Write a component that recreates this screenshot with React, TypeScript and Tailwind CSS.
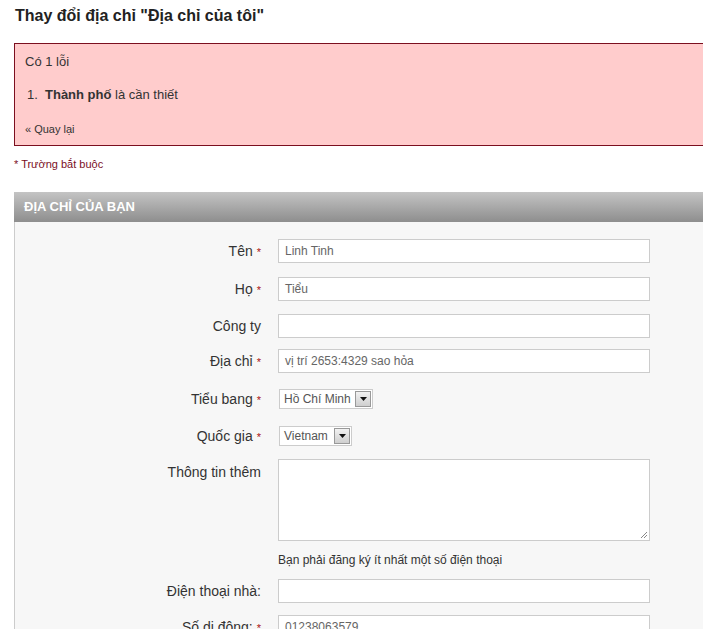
import React from "react";

const font = { fontFamily: '"Liberation Sans", Arial, sans-serif' };

function Req() {
  return <span className="ml-[4px] text-[11px] text-[#a11]">*</span>;
}

function Row(props: { label: string; required?: boolean; className?: string; top?: boolean; children: React.ReactNode }) {
  return (
    <div className={`flex ${props.top ? "items-start" : "items-center"} ${props.className ?? ""}`}>
      <div className={`w-[246px] shrink-0 text-right text-[14px] leading-[16px] text-[#333] ${props.top ? "pt-[5px]" : ""}`}>
        {props.label}
        {props.required && <Req />}
      </div>
      <div className="ml-[17px]">{props.children}</div>
    </div>
  );
}

function TextInput({ value }: { value?: string }) {
  return (
    <div className="flex h-[24px] w-[372px] items-center border border-[#ccc] bg-white px-[6px] text-[12px] text-[#666]">
      {value}
    </div>
  );
}

function FakeSelect({ value, width }: { value: string; width: string }) {
  return (
    <div className={`ml-[1px] flex h-[20px] ${width} items-center justify-between border border-[#ccc] bg-white pl-[4px] pr-[1px] text-[12px] text-[#555]`}>
      <span>{value}</span>
      <span className="flex h-[16px] w-[16px] items-center justify-center border border-[#999] bg-gradient-to-b from-[#f2f2f2] to-[#cfcfcf]">
        <svg width="7" height="4" viewBox="0 0 7 4">
          <path d="M0 0 L7 0 L3.5 4 Z" fill="#111" />
        </svg>
      </span>
    </div>
  );
}

export default function App() {
  return (
    <div className="h-[629px] w-[703px] overflow-hidden bg-white" style={font}>
      <div className="w-[760px] pl-[14px]">
        <h1 className="mt-[6px] pl-[1px] text-[16px] font-bold leading-[20px] text-[#222]">
          Thay đổi địa chỉ "Địa chỉ của tôi"
        </h1>

        <div className="mt-[17px] border border-[#7b0f1f] bg-[#ffcccc] pl-[10px] pt-[10px] pb-[9px] text-[#333]">
          <div className="text-[13px] leading-[16px]">Có 1 lỗi</div>
          <div className="mt-[17px] flex text-[13px] leading-[16px]">
            <span className="ml-[2px] w-[18px]">1.</span>
            <span>
              <b>Thành phố</b> là cần thiết
            </span>
          </div>
          <div className="mt-[19px] text-[11px] leading-[14px]">« Quay lại</div>
        </div>

        <div className="mt-[11px] text-[11px] leading-[14px] text-[#7b0f1f]">* Trường bắt buộc</div>

        <div className="mt-[21px]">
          <div className="flex h-[30px] items-center bg-gradient-to-b from-[#c4c4c4] to-[#8e8e8e] pl-[10px] text-[13px] font-bold text-white">
            ĐỊA CHỈ CỦA BẠN
          </div>
          <div className="border-l border-[#ccc] bg-[#f7f7f7] pt-[17px] pb-[20px]">
            <Row label="Tên" required>
              <TextInput value="Linh Tinh" />
            </Row>
            <Row label="Họ" required className="mt-[14px]">
              <TextInput value="Tiểu" />
            </Row>
            <Row label="Công ty" className="mt-[13px]">
              <TextInput />
            </Row>
            <Row label="Địa chỉ" required className="mt-[11px]">
              <TextInput value="vị trí 2653:4329 sao hỏa" />
            </Row>
            <Row label="Tiểu bang" required className="mt-[16px]">
              <FakeSelect value="Hồ Chí Minh" width="w-[94px]" />
            </Row>
            <Row label="Quốc gia" required className="mt-[17px]">
              <FakeSelect value="Vietnam" width="w-[73px]" />
            </Row>
            <Row label="Thông tin thêm" top className="mt-[13px]">
              <div className="relative h-[82px] w-[372px] border border-[#ccc] bg-white">
                <svg className="absolute bottom-[1px] right-[1px]" width="8" height="8" viewBox="0 0 8 8">
                  <path d="M7 1 L1 7 M7 4 L4 7" stroke="#888" strokeWidth="1" />
                </svg>
              </div>
            </Row>
            <div className="ml-[263px] mt-[11px] text-[12px] leading-[16px] text-[#333]">
              Bạn phải đăng ký ít nhất một số điện thoại
            </div>
            <Row label="Điện thoại nhà:" className="mt-[11px]">
              <TextInput />
            </Row>
            <Row label="Số di động:" required className="mt-[12px]">
              <TextInput value="01238063579" />
            </Row>
          </div>
        </div>
      </div>
    </div>
  );
}
